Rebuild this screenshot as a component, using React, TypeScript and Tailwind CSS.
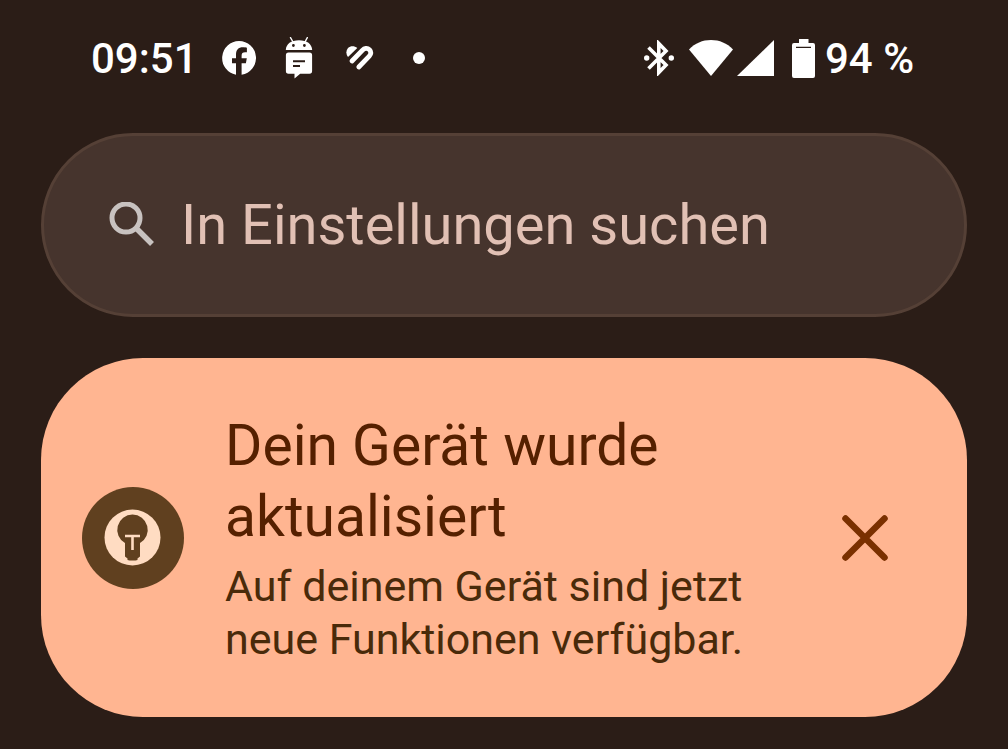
import { useState } from 'react'

// ── Status bar icons ──────────────────────────────────────────────────────────

function FacebookIcon() {
  return (
    <svg className="w-[34px] h-[34px]" viewBox="0 0 34 34" aria-hidden="true">
      <path
        fill="#fff"
        d="M17 0a17 17 0 0 1 2.6 33.8V22.2h4.3l.9-5h-5.200v-2.400c0-2.600 1-3.600 3.600-3.600h1.700V6.700c-.9-.3-2.500-.5-3.900-.5-4.700 0-7 2.500-7 7.500v3.500H10v5h4v11.500A17 17 0 0 1 17 0z"
      />
    </svg>
  )
}

function AndroidMessageIcon() {
  return (
    <svg className="w-[28px] h-[42px]" viewBox="0 0 28 42" aria-hidden="true">
      <path d="M5.500.7 8 5M22.300.7 20 5" stroke="#fff" strokeWidth="1.400" strokeLinecap="round" />
      <path
        fill="#fff"
        fillRule="evenodd"
        d="M.8 13C1.200 6.800 6 3.200 14 3.200S26.800 6.800 27.200 13zM7 8.500a1.400 1.400 0 1 0 2.800 0 1.400 1.400 0 1 0-2.800 0zm11 0a1.400 1.400 0 1 0 2.800 0 1.400 1.400 0 1 0-2.800 0z"
      />
      <path
        fill="#fff"
        fillRule="evenodd"
        d="M3.500 15.500h21a2.600 2.600 0 0 1 2.600 2.600v16a2.600 2.600 0 0 1-2.600 2.600h-9.300L9.500 41.500v-4.800h-6A2.600 2.600 0 0 1 .9 34V18.100a2.600 2.600 0 0 1 2.600-2.600zM8 23.200v2h12v-2zm0 4.700v2h7v-2z"
      />
    </svg>
  )
}

function HeartIcon() {
  return (
    <svg className="w-[30px] h-[26px]" viewBox="0 0 30 26" fill="none" aria-hidden="true">
      <path fill="#fff" d="M3 12A7 7 0 0 1 3 3C5.500.5 9.500.6 12.300 3z" />
      <path
        d="M7 16 17.300 5.300c2-2 5-2.600 7.200-.6 2 2 1.700 4.500-.2 6.500L13.800 22"
        stroke="#fff"
        strokeWidth="4.800"
        strokeLinecap="round"
      />
    </svg>
  )
}

function BluetoothIcon() {
  return (
    <svg className="w-[30px] h-[36px]" viewBox="0 0 30 36" fill="none" aria-hidden="true">
      <path d="M4.500 7.500 22 25l-7.200 7.500V3.500L22 11 4.500 28.500" stroke="#fff" strokeWidth="3.600" />
      <circle cx="2.700" cy="18" r="2.700" fill="#fff" />
      <circle cx="27.300" cy="18" r="2.700" fill="#fff" />
    </svg>
  )
}

function WifiIcon() {
  return (
    <svg className="w-[44px] h-[36px]" viewBox="0 0 44 36" aria-hidden="true">
      <path fill="#fff" d="M0 9.500C6 3.200 13.500 0 22 0s16 3.200 22 9.500L22 36z" />
    </svg>
  )
}

function SignalIcon() {
  return (
    <svg className="w-[37px] h-[36px]" viewBox="0 0 37 36" aria-hidden="true">
      <path fill="#fff" d="M37 0v36H0z" />
    </svg>
  )
}

function BatteryIcon() {
  return (
    <svg className="w-[23px] h-[39px]" viewBox="0 0 23 39" aria-hidden="true">
      <path
        fill="#fff"
        fillRule="evenodd"
        d="M7 0h9.500v4H21a2 2 0 0 1 2 2v31a2 2 0 0 1-2 2H2a2 2 0 0 1-2-2V6a2 2 0 0 1 2-2h5zM4 7.700v1.300h15V7.700z"
      />
    </svg>
  )
}

function StatusBar() {
  return (
    <header className="flex h-[116px] items-center justify-between px-[50px] text-[42px] font-medium text-white">
      <div className="flex items-center">
        <time className="w-[131px]">09:51</time>
        <FacebookIcon />
        <div className="ml-[29px] flex items-center gap-8">
          <AndroidMessageIcon />
          <HeartIcon />
        </div>
        <span className="ml-[38px] h-3 w-3 rounded-full bg-white" />
      </div>
      <div className="flex items-center">
        <BluetoothIcon />
        <div className="ml-[15px] mr-[18px] flex items-center gap-1">
          <WifiIcon />
          <SignalIcon />
        </div>
        <BatteryIcon />
        <span className="ml-[10px] min-w-[92px]">94 %</span>
      </div>
    </header>
  )
}

// ── Search ────────────────────────────────────────────────────────────────────

function SearchBar() {
  const [query, setQuery] = useState('')

  return (
    <label className="mt-[17px] flex h-[184px] items-center rounded-full border-[3px] border-[#554036] bg-[#46342d] pl-[65px] pr-16">
      <svg className="h-[46px] w-[46px] shrink-0" viewBox="0 0 46 46" fill="none" aria-hidden="true">
        <circle cx="17" cy="16" r="14" stroke="#c8c2c0" strokeWidth="5" />
        <path d="M27 26 43 42" stroke="#c8c2c0" strokeWidth="5.500" />
      </svg>
      <input
        type="text"
        value={query}
        onChange={e => setQuery(e.target.value)}
        placeholder="In Einstellungen suchen"
        aria-label="In Einstellungen suchen"
        className="ml-[26px] h-[72px] min-w-0 flex-1 bg-transparent text-[56px] text-[#e1c0b4] outline-none placeholder:text-[#e1c0b4]"
      />
    </label>
  )
}

// ── Update card ───────────────────────────────────────────────────────────────

function TipIcon() {
  return (
    <svg className="h-[102px] w-[102px] shrink-0" viewBox="0 0 102 102" aria-hidden="true">
      <circle cx="51" cy="51" r="51" fill="#60401f" />
      <circle cx="50.500" cy="50.500" r="28" fill="#ffdcc2" />
      <path
        fill="#60401f"
        d="M50.500 27.500a15.300 15.300 0 0 1 7.500 28.600V69.500l-2.500 2v1.500l-2 .5h-6l-2-.5v-1.500l-2.500-2V56.100a15.300 15.300 0 0 1 7.500-28.600z"
      />
      <path d="M43 49h15M50.500 49v14" stroke="#ffdcc2" strokeWidth="2.600" />
    </svg>
  )
}

function UpdateCard({ onClose }: { onClose: () => void }) {
  return (
    <section className="mt-[41px] flex h-[359px] items-center rounded-[102px] bg-[#ffb591] pl-[41px] pr-[79px]">
      <TipIcon />
      <div className="ml-[41px] min-w-0 flex-1">
        <h2 className="max-w-[560px] text-[57px] leading-[71px] text-[#552000]">
          Dein Gerät wurde aktualisiert
        </h2>
        <p className="mt-2 max-w-[560px] text-[43px] leading-[53px] text-[#492a0a]">
          Auf deinem Gerät sind jetzt neue Funktionen verfügbar.
        </p>
      </div>
      <button type="button" onClick={onClose} aria-label="Schließen" className="shrink-0">
        <svg className="h-[46px] w-[46px]" viewBox="0 0 46 46" fill="none" aria-hidden="true">
          <path d="M3.500 3.500 42.500 42.500M42.500 3.500 3.500 42.500" stroke="#7a3000" strokeWidth="6.500" strokeLinecap="round" />
        </svg>
      </button>
    </section>
  )
}

export default function App() {
  const [showUpdate, setShowUpdate] = useState(true)

  return (
    <main className="min-h-screen bg-[#2b1d17] px-[41px] font-['Roboto',sans-serif]">
      <StatusBar />
      <SearchBar />
      {showUpdate && <UpdateCard onClose={() => setShowUpdate(false)} />}
    </main>
  )
}
